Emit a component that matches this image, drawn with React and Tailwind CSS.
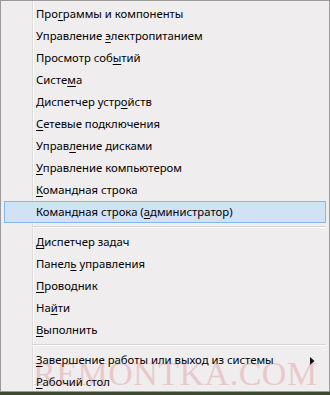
import React from 'react';

const items = [
  { pre: 'Про', key: 'г', post: 'раммы и компоненты' },
  { pre: 'Управление ', key: 'э', post: 'лектропитанием' },
  { pre: 'Просмотр соб', key: 'ы', post: 'тий' },
  { pre: 'Систе', key: 'м', post: 'а' },
  { pre: 'Диспетчер устр', key: 'о', post: 'йств' },
  { pre: '', key: 'С', post: 'етевые подключения' },
  { pre: 'Управ', key: 'л', post: 'ение дисками' },
  { pre: '', key: 'У', post: 'правление компьютером' },
  { pre: '', key: 'К', post: 'омандная строка' },
  { pre: 'Командная строка (', key: 'а', post: 'дминистратор)', active: true },
  'sep',
  { pre: '', key: 'Д', post: 'испетчер задач' },
  { pre: 'Панел', key: 'ь', post: ' управления' },
  { pre: '', key: 'П', post: 'роводник' },
  { pre: 'На', key: 'й', post: 'ти' },
  { pre: '', key: 'В', post: 'ыполнить' },
  'sep',
  { pre: '', key: 'З', post: 'авершение работы или выход из системы', sub: true },
  { pre: '', key: 'Р', post: 'абочий стол' },
];

function MenuItem({ item }) {
  return (
    <div
      className={
        'relative flex h-[22px] items-center pl-[31px] pr-3 mx-[3px] border ' +
        (item.active ? 'bg-[#d0e2f4] border-[#84b9ee]' : 'border-transparent')
      }
    >
      <span className="text-[11.3px] text-black whitespace-nowrap">
        {item.pre}
        <span className="underline underline-offset-2">{item.key}</span>
        {item.post}
      </span>
      {item.sub && (
        <svg className="absolute right-[10px] top-[7px]" width="5" height="8" viewBox="0 0 5 8">
          <path d="M0 0 L4.5 4 L0 8 Z" fill="#111" />
        </svg>
      )}
    </div>
  );
}

export default function App() {
  return (
    <div className="h-[395px] w-[330px] bg-[#3d4a30]" style={{ fontFamily: '"Noto Sans", "Open Sans", sans-serif' }}>
      <div className="relative h-[392px] w-[330px] overflow-hidden border border-[#9a9a9a] bg-[#efedee] pt-[2px]">
        {/* gutter */}
        <div className="absolute left-[31px] top-0 bottom-0 w-[1px] bg-[#dcdcdc]" />
        <div className="absolute left-[32px] top-0 bottom-0 w-[1px] bg-[#fbfbfb]" />
        <div className="relative flex flex-col">
          {items.map((item, i) =>
            item === 'sep' ? (
              <div key={i} className="flex h-[8px] items-center pl-[31px] pr-[3px]">
                <div className="h-[2px] w-full border-t border-[#d5d5d5] border-b-white border-b" />
              </div>
            ) : (
              <MenuItem key={i} item={item} />
            )
          )}
        </div>
        {/* watermark */}
        <div
          className="pointer-events-none absolute left-[32px] top-[356px] text-[34px] leading-none tracking-[0.5px] text-[#d23a3a] opacity-20"
          style={{ fontFamily: '"Liberation Serif", serif' }}
        >
          REMONTKA.COM
        </div>
      </div>
    </div>
  );
}
